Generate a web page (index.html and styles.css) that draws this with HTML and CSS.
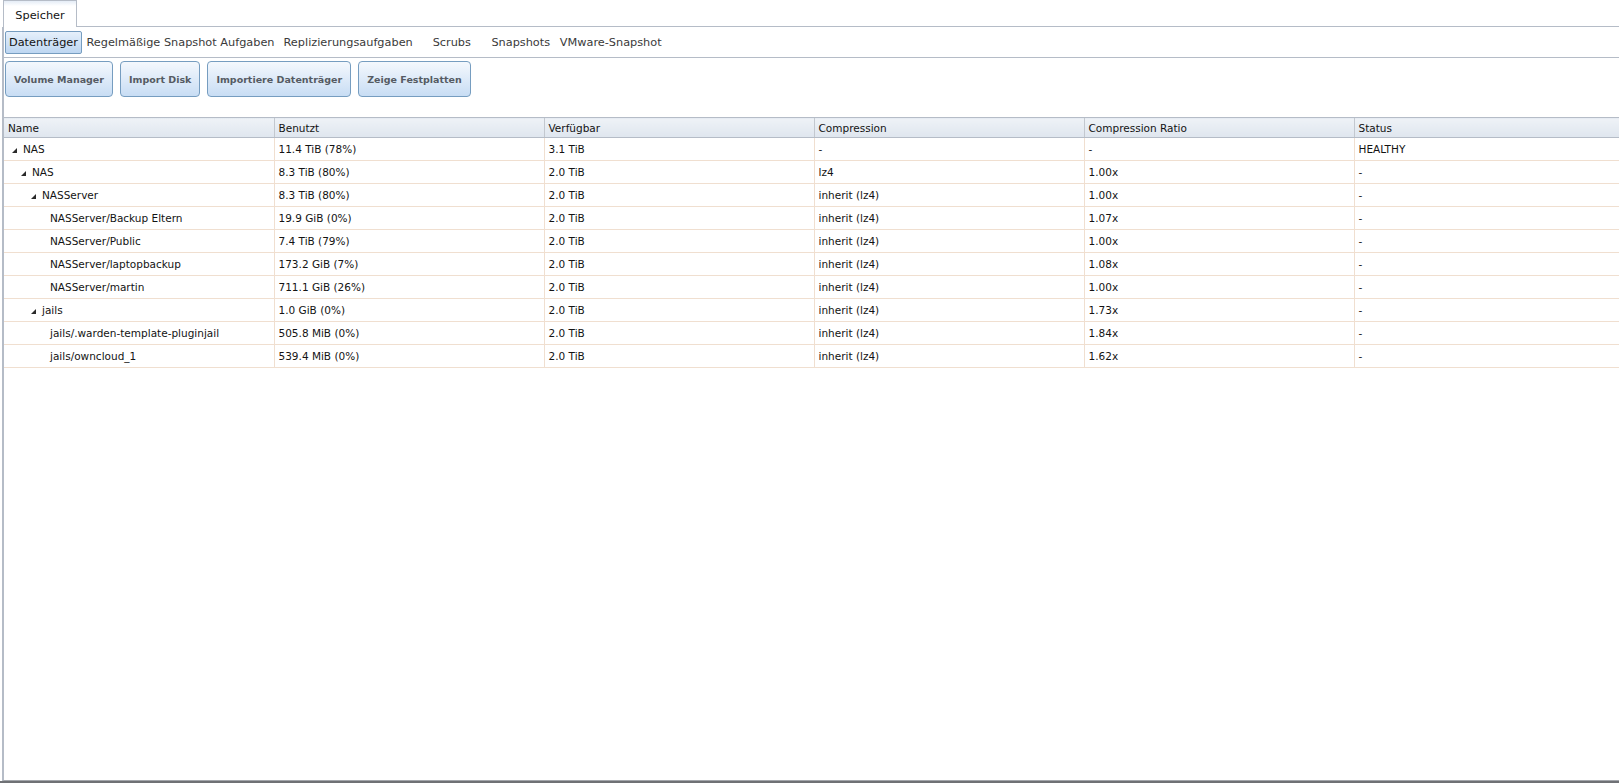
FILE: index.html
```html
<!DOCTYPE html>
<html>
<head>
<meta charset="utf-8">
<link rel="stylesheet" href="styles.css">
</head>
<body>
<div class="page">
  <div class="tabbar">
    <div class="tab">Speicher</div>
    <div class="tabrest"></div>
  </div>
  <div class="panel">
    <div class="subnav">
      <span class="sub selected">Datenträger</span>
      <span class="sub">Regelmäßige Snapshot Aufgaben</span>
      <span class="sub">Replizierungsaufgaben</span>
      <span class="sub">Scrubs</span>
      <span class="sub">Snapshots</span>
      <span class="sub">VMware-Snapshot</span>
    </div>
    <div class="toolbar">
      <button class="btn">Volume Manager</button>
      <button class="btn">Import Disk</button>
      <button class="btn">Importiere Datenträger</button>
      <button class="btn">Zeige Festplatten</button>
    </div>
    <table class="grid">
      <colgroup>
        <col class="c1"><col class="c2"><col class="c2"><col class="c2"><col class="c2"><col>
      </colgroup>
      <thead>
        <tr><th>Name</th><th>Benutzt</th><th>Verfügbar</th><th>Compression</th><th>Compression Ratio</th><th>Status</th></tr>
      </thead>
      <tbody>
        <tr><td><span class="name l0"><i class="tri"></i>NAS</span></td><td>11.4 TiB (78%)</td><td>3.1 TiB</td><td>-</td><td>-</td><td>HEALTHY</td></tr>
        <tr><td><span class="name l1"><i class="tri"></i>NAS</span></td><td>8.3 TiB (80%)</td><td>2.0 TiB</td><td>lz4</td><td>1.00x</td><td>-</td></tr>
        <tr><td><span class="name l2"><i class="tri"></i>NASServer</span></td><td>8.3 TiB (80%)</td><td>2.0 TiB</td><td>inherit (lz4)</td><td>1.00x</td><td>-</td></tr>
        <tr><td><span class="name l3">NASServer/Backup Eltern</span></td><td>19.9 GiB (0%)</td><td>2.0 TiB</td><td>inherit (lz4)</td><td>1.07x</td><td>-</td></tr>
        <tr><td><span class="name l3">NASServer/Public</span></td><td>7.4 TiB (79%)</td><td>2.0 TiB</td><td>inherit (lz4)</td><td>1.00x</td><td>-</td></tr>
        <tr><td><span class="name l3">NASServer/laptopbackup</span></td><td>173.2 GiB (7%)</td><td>2.0 TiB</td><td>inherit (lz4)</td><td>1.08x</td><td>-</td></tr>
        <tr><td><span class="name l3">NASServer/martin</span></td><td>711.1 GiB (26%)</td><td>2.0 TiB</td><td>inherit (lz4)</td><td>1.00x</td><td>-</td></tr>
        <tr><td><span class="name l2"><i class="tri"></i>jails</span></td><td>1.0 GiB (0%)</td><td>2.0 TiB</td><td>inherit (lz4)</td><td>1.73x</td><td>-</td></tr>
        <tr><td><span class="name l3">jails/.warden-template-pluginjail</span></td><td>505.8 MiB (0%)</td><td>2.0 TiB</td><td>inherit (lz4)</td><td>1.84x</td><td>-</td></tr>
        <tr><td><span class="name l3">jails/owncloud_1</span></td><td>539.4 MiB (0%)</td><td>2.0 TiB</td><td>inherit (lz4)</td><td>1.62x</td><td>-</td></tr>
      </tbody>
    </table>
  </div>
  <div class="footer"></div>
</div>
</body>
</html>
```

FILE: styles.css
```css
html, body {
  margin: 0;
  padding: 0;
  background: #ffffff;
}
body {
  font-family: "DejaVu Sans", Verdana, sans-serif;
  font-size: 10.5px;
  color: #131313;
}
.page {
  height: 783px;
  display: flex;
  flex-direction: column;
  overflow: hidden;
}
.tabbar {
  display: flex;
  height: 27px;
  flex: none;
}
.tab {
  margin-left: 3px;
  width: 74px;
  box-sizing: border-box;
  border: 1px solid #b5bcc7;
  border-bottom: none;
  background: linear-gradient(#e4ecf6 0px, #ffffff 5px, #ffffff);
  font-size: 11.3px;
  color: #131313;
  text-align: center;
  line-height: 29px;
}
.tabrest {
  flex: 1;
  border-bottom: 1px solid #b5bcc7;
}
.panel {
  flex: 1;
  margin-left: 2px;
  border-left: 2px solid #b5bcc7;
  border-bottom: 1px solid #a3a6ab;
  display: flex;
  flex-direction: column;
  min-height: 0;
}
.footer {
  height: 2px;
  flex: none;
  background: #6f7175;
}
.subnav {
  height: 30px;
  border-bottom: 1px solid #b5bcc7;
  display: flex;
  align-items: center;
  padding-left: 1px;
  flex: none;
}
.sub {
  font-size: 11.3px;
  color: #3a3a3a;
  min-width: 60px;
  padding: 0 3.5px;
  text-align: center;
  height: 21px;
  line-height: 21px;
  border: 1px solid transparent;
  border-radius: 2px;
}
.sub.selected {
  background: linear-gradient(#e6f0fb, #bdd6f1);
  border-color: #769dc0;
  color: #131313;
  padding: 0 3px;
}
.toolbar {
  display: flex;
  gap: 7px;
  padding: 3px 0 0 1px;
  height: 37px;
  flex: none;
}
.btn {
  font-family: "DejaVu Sans", Verdana, sans-serif;
  font-size: 9.5px;
  font-weight: bold;
  color: #555b63;
  height: 36px;
  padding: 0 8px;
  border: 1px solid #769dc0;
  border-radius: 4px;
  background: linear-gradient(#f4f8fd, #c8ddf4);
  margin: 0;
}
.grid {
  margin-top: 19px;
  border-collapse: collapse;
  table-layout: fixed;
  width: 100%;
  flex: none;
}
.c1 { width: 270px; }
.c2 { width: 270px; }
.grid th {
  height: 19px;
  padding: 0 4px;
  text-align: left;
  font-weight: normal;
  font-size: 10.5px;
  color: #131313;
  background: linear-gradient(#eef2f7, #dfe6ee);
  border-top: 1px solid #b5bcc7;
  border-bottom: 1px solid #b5bcc7;
  border-left: 1px solid #c3c8cf;
  white-space: nowrap;
}
.grid th:first-child { border-left: none; }
.grid td {
  height: 22px;
  padding: 0 4px;
  border-bottom: 1px solid #f0dfd0;
  border-left: 1px solid #f0dfd0;
  white-space: nowrap;
  overflow: hidden;
}
.grid td:first-child { border-left: none; }
.name {
  display: inline-flex;
  align-items: center;
}
.l0 { padding-left: 4px; }
.l1 { padding-left: 13px; }
.l2 { padding-left: 23px; }
.l3 { padding-left: 42px; }
.tri {
  display: inline-block;
  width: 0;
  height: 0;
  border-left: 5px solid transparent;
  border-bottom: 5px solid #2a2a2a;
  margin-right: 6px;
  margin-top: 2px;
}
```
